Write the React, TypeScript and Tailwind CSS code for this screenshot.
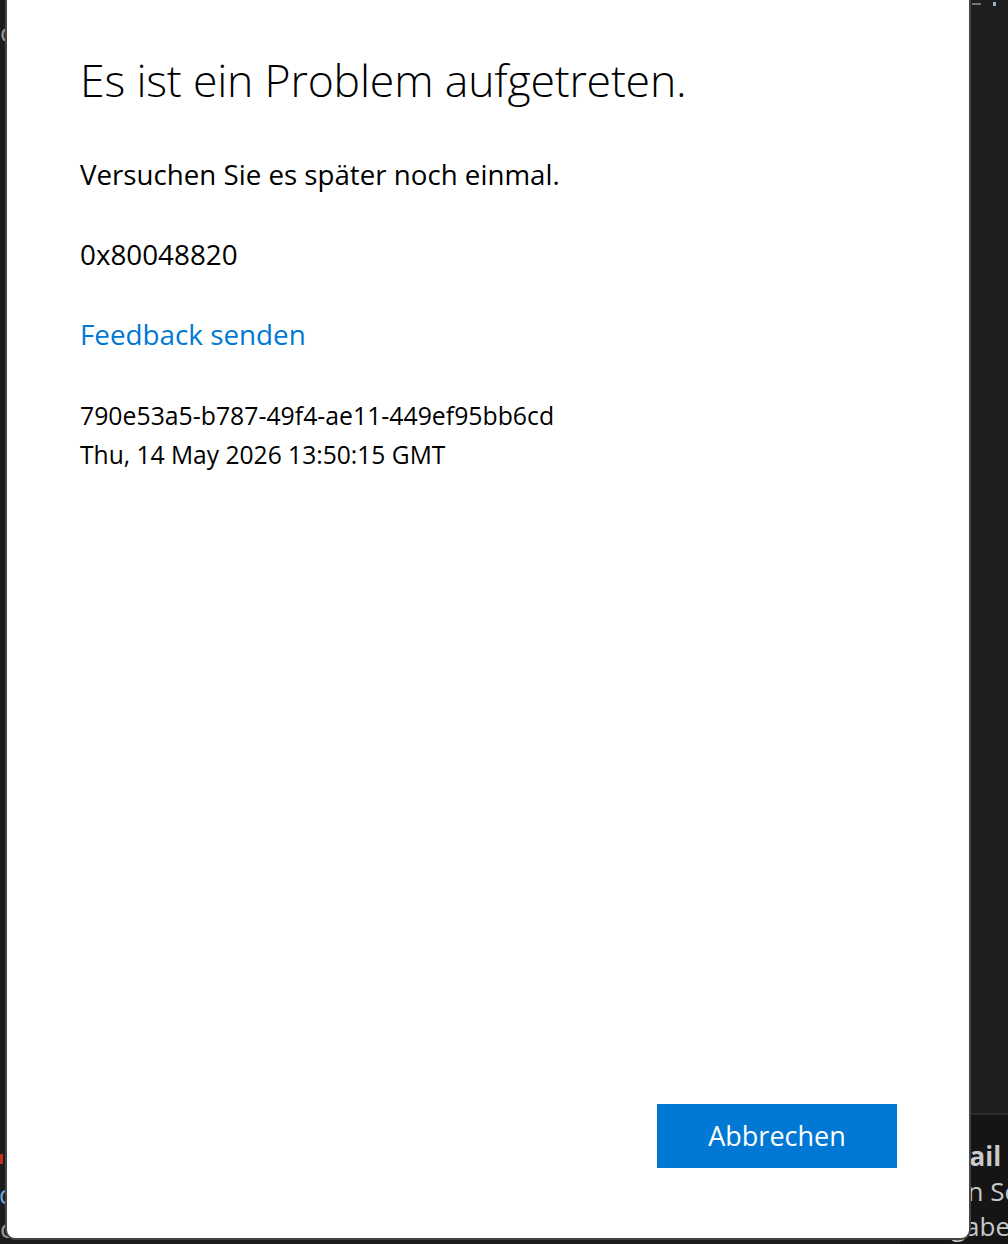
import React from "react";

const sans = { fontFamily: '"Open Sans", "Noto Sans", sans-serif' };

export default function App() {
  return (
    <div className="relative h-[1244px] w-[1008px] overflow-hidden bg-[#1c1c1c]" style={sans}>
      {/* app content behind the modal */}
      <div className="flex h-full w-full">
        <div className="flex h-full w-[40px] flex-col overflow-hidden text-[#9a9a9a]">
          <div className="ml-[0px] mt-[16px] text-[26px] leading-[32px]">c</div>
          <div className="mt-[1106px] ml-[0px] h-[10px] w-[3px] bg-[#c42b1c]" />
          <div className="ml-[-1px] mt-[14px] text-[26px] leading-[32px] text-[#6aa6d8]">d</div>
          <div className="ml-[0px] mt-[2px] text-[26px] leading-[32px]">c</div>
        </div>
        <div className="flex-1" />
        <div className="flex h-full w-[108px] flex-col overflow-hidden">
          <div className="flex h-[1117px] flex-col bg-[#1e1e1e]">
            <div className="ml-[72px] mt-[2px] flex items-center gap-[12px]">
              <div className="h-[2px] w-[9px] bg-[#6d7a86]" />
              <div className="h-[4px] w-[3px] bg-[#9bb3c8]" />
            </div>
          </div>
          <div className="h-[2px] bg-[#2e2e2e]" />
          <div className="flex flex-1 flex-col bg-[#151515] pt-[24px] text-[26px] leading-[35px] text-[#c9c9c9] whitespace-nowrap">
            <span className="ml-[45px] font-bold">Mail</span>
            <span className="ml-[61px]">in Schritt</span>
            <span className="ml-[14px]">Eingabe</span>
          </div>
        </div>
      </div>

      {/* modal dialog */}
      <div className="absolute left-[5px] top-0 flex h-[1240px] w-[966px] flex-col rounded-b-[10px] border-x-2 border-b-2 border-[#454545] bg-white">
        <div className="flex flex-1 flex-col px-[73px] pt-[50px] text-black">
          <h1 className="text-[44.6px] font-light leading-[60px] tracking-[-0.2px]">Es ist ein Problem aufgetreten.</h1>
          <p className="mt-[44px] text-[27.7px] leading-[40px]">Versuchen Sie es später noch einmal.</p>
          <p className="mt-[40px] text-[27.8px] leading-[40px]">0x80048820</p>
          <a className="mt-[40px] text-[27.8px] leading-[40px] text-[#0078d4]" href="#">Feedback senden</a>
          <div className="mt-[41px] flex flex-col leading-[40px]">
            <span className="text-[24.8px]">790e53a5-b787-49f4-ae11-449ef95bb6cd</span>
            <span className="text-[24.6px]">Thu, 14 May 2026 13:50:15 GMT</span>
          </div>
        </div>
        <div className="flex justify-end pb-[70px] pr-[72px]">
          <button className="h-[64px] w-[240px] bg-[#0078d4] text-[27px] text-white">Abbrechen</button>
        </div>
      </div>
    </div>
  );
}
